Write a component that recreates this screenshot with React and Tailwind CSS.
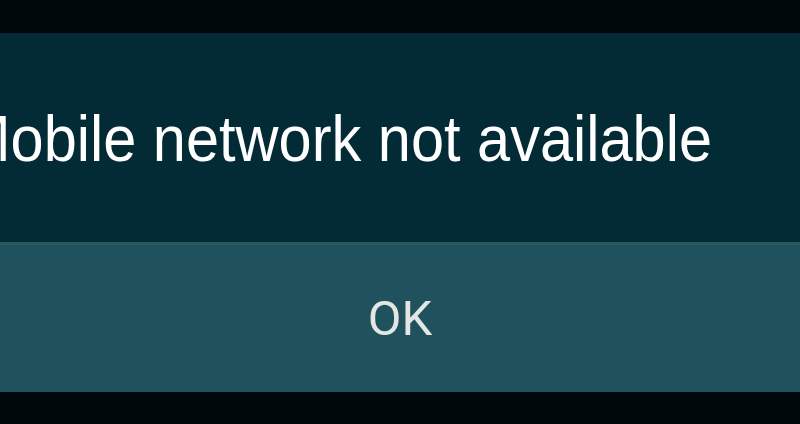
export default function App() {
  return (
    <div className="w-[800px] h-[424px] bg-[#00070b] flex flex-col overflow-hidden">
      <div className="h-[33px] shrink-0" />
      {/* message */}
      <div className="h-[209px] shrink-0 bg-[#022b35] flex items-center overflow-hidden">
        <p
          className="ml-[-39px] whitespace-nowrap text-white text-[64px] leading-none origin-left scale-x-[0.93] pt-[2px]"
          style={{ fontFamily: '"Liberation Sans", Arial, sans-serif' }}
        >
          Mobile network not available
        </p>
      </div>
      {/* button */}
      <button
        className="h-[150px] shrink-0 bg-[#1f525d] border-t-[3px] border-[#27595f] flex items-center justify-center text-[#e4e6e6] text-[49px]"
        style={{ fontFamily: 'Roboto, "Noto Sans", sans-serif' }}
      >
        OK
      </button>
    </div>
  );
}
